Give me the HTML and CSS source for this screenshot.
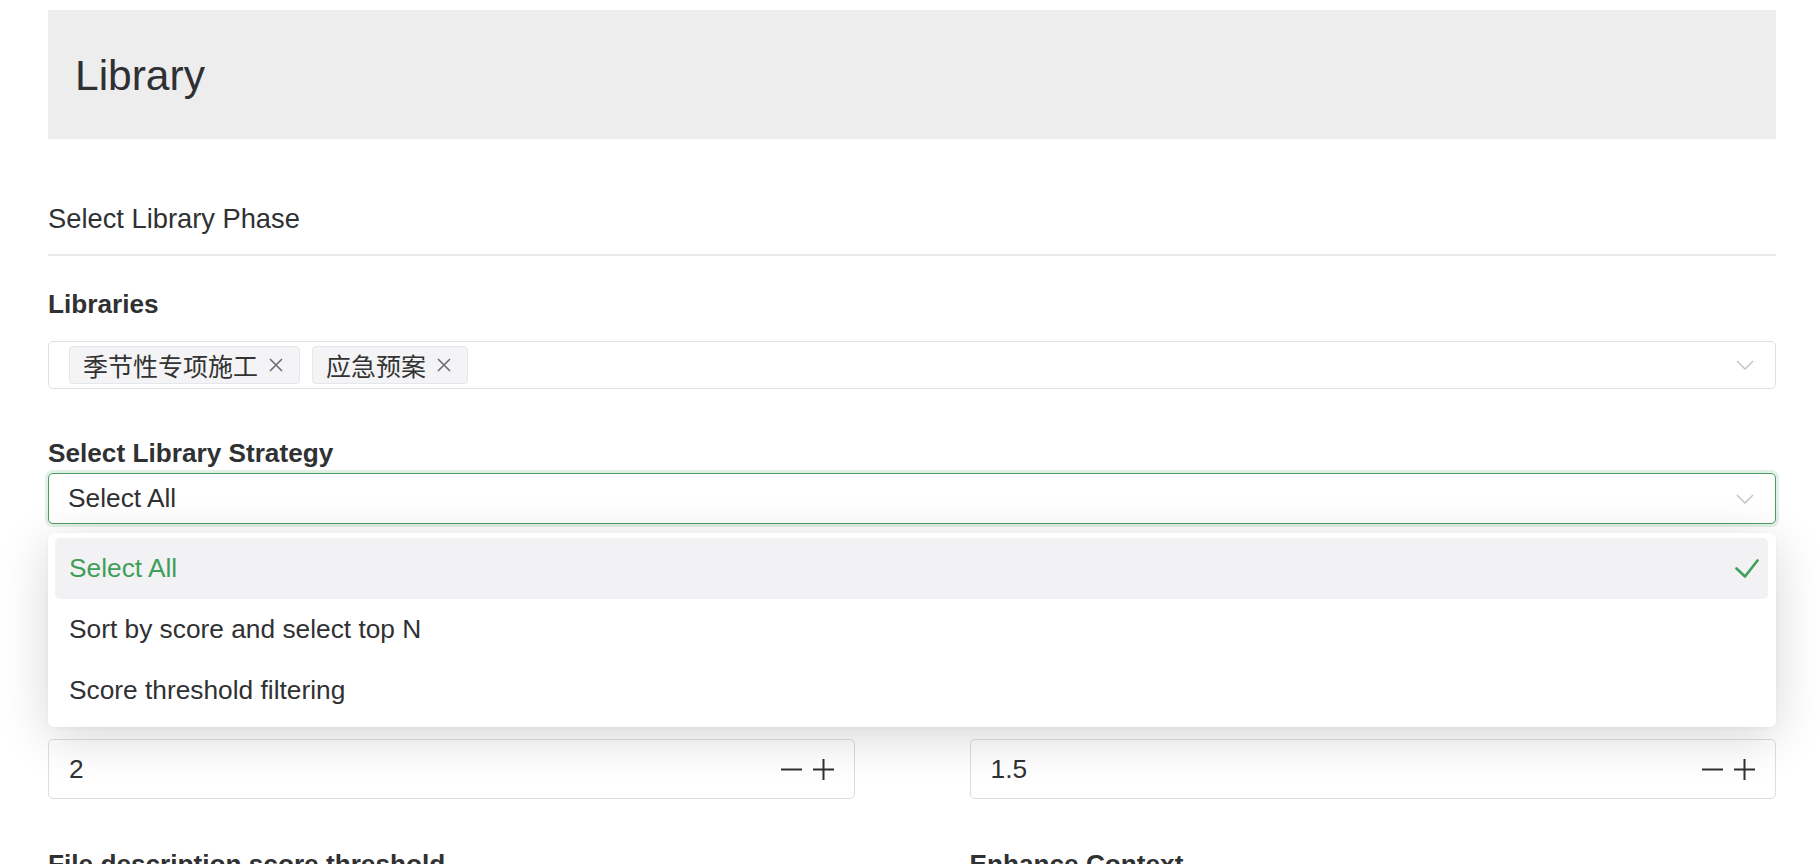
FILE: index.html
```html
<!DOCTYPE html>
<html lang="en">
<head>
<meta charset="utf-8">
<title>Library</title>
<link rel="stylesheet" href="styles.css">
</head>
<body>
<div class="page">
  <header class="page-header">
    <h1 class="page-title">Library</h1>
  </header>

  <section class="phase">
    <h2 class="phase-title">Select Library Phase</h2>

    <div class="field field-libraries">
      <label class="field-label">Libraries</label>
      <div class="multi-select">
        <div class="tags">
          <span class="tag">季节性专项施工<svg class="tag-close" viewBox="0 0 16 16" width="16" height="16"><path d="M2 2 L14 14 M14 2 L2 14"/></svg></span>
          <span class="tag">应急预案<svg class="tag-close" viewBox="0 0 16 16" width="16" height="16"><path d="M2 2 L14 14 M14 2 L2 14"/></svg></span>
        </div>
        <svg class="chevron" viewBox="0 0 18 10" width="18" height="10"><path d="M1 1 L9 9 L17 1"/></svg>
      </div>
    </div>

    <div class="field field-strategy">
      <label class="field-label">Select Library Strategy</label>
      <div class="select-wrap">
        <div class="select is-focus">
          <span class="select-value">Select All</span>
          <svg class="chevron" viewBox="0 0 18 10" width="18" height="10"><path d="M1 1 L9 9 L17 1"/></svg>
        </div>
        <ul class="dropdown">
          <li class="option is-selected"><span>Select All</span><svg class="check" viewBox="0 0 24 20" width="24" height="20"><path d="M1.5 9.5 L10 17.5 L22.5 1.5"/></svg></li>
          <li class="option"><span>Sort by score and select top N</span></li>
          <li class="option"><span>Score threshold filtering</span></li>
        </ul>
      </div>
    </div>

    <div class="grid">
      <div class="field">
        <div class="number-input">
          <span class="number-value">2</span>
          <span class="steppers">
            <svg class="step" viewBox="0 0 21 21" width="21" height="21"><path d="M0 10.5 H21"/></svg>
            <svg class="step" viewBox="0 0 21 21" width="21" height="21"><path d="M0 10.5 H21 M10.5 0 V21"/></svg>
          </span>
        </div>
      </div>
      <div class="field">
        <div class="number-input">
          <span class="number-value">1.5</span>
          <span class="steppers">
            <svg class="step" viewBox="0 0 21 21" width="21" height="21"><path d="M0 10.5 H21"/></svg>
            <svg class="step" viewBox="0 0 21 21" width="21" height="21"><path d="M0 10.5 H21 M10.5 0 V21"/></svg>
          </span>
        </div>
      </div>
      <div class="field">
        <label class="field-label">File description score threshold</label>
        <div class="number-input">
          <span class="number-value">0.5</span>
        </div>
      </div>
      <div class="field">
        <label class="field-label">Enhance Context</label>
        <div class="number-input">
          <span class="number-value">0</span>
        </div>
      </div>
    </div>
  </section>
</div>
</body>
</html>
```

FILE: styles.css
```css
* {
  box-sizing: border-box;
}

html, body {
  margin: 0;
  padding: 0;
  background: #ffffff;
}

body {
  font-family: "Liberation Sans", Arial, "Noto Sans CJK SC", sans-serif;
  color: #303133;
  overflow: hidden;
}

.page {
  padding: 10px 44px 0 48px;
}

.page-header {
  height: 129px;
  background: #ededed;
  display: flex;
  align-items: center;
  padding-left: 27px;
}

.page-title {
  margin: 0;
  font-size: 42.5px;
  font-weight: 400;
  line-height: 48px;
  color: #2f3033;
  padding-top: 3px;
}

.phase-title {
  margin: 64px 0 0;
  font-size: 27.3px;
  font-weight: 400;
  line-height: 32px;
  padding-bottom: 19px;
  border-bottom: 2px solid #ebebef;
  color: #303133;
}

.field {
  display: flex;
  flex-direction: column;
}

.field-label {
  font-size: 26.2px;
  font-weight: 700;
  line-height: 30px;
  color: #303133;
}

.field-libraries {
  margin-top: 33px;
  gap: 22px;
}

.field-strategy {
  margin-top: 49px;
  gap: 5px;
}

.multi-select {
  height: 48px;
  border: 1px solid #dfe0e4;
  border-radius: 5px;
  padding: 0 21px 0 20px;
  display: flex;
  align-items: center;
  justify-content: space-between;
}

.tags {
  display: flex;
  gap: 12px;
}

.tag {
  height: 38px;
  display: inline-flex;
  align-items: center;
  gap: 10px;
  padding: 0 15px 0 13px;
  background: #f4f4f6;
  border: 1px solid #e6e7eb;
  border-radius: 4px;
  font-family: "Noto Sans CJK SC", sans-serif;
  font-size: 25px;
  line-height: 30px;
  color: #333333;
}

.tag-close {
  fill: none;
  stroke: #6b6b70;
  stroke-width: 1.6;
}

.chevron {
  fill: none;
  stroke: #c3c5ca;
  stroke-width: 1.5;
  flex: none;
}

.select-wrap {
  position: relative;
}

.select {
  height: 51px;
  border: 1px solid #c8cbd1;
  border-radius: 5px;
  padding: 0 21px 0 19px;
  display: flex;
  align-items: center;
  justify-content: space-between;
  font-size: 26.3px;
  background: #ffffff;
}

.select.is-focus {
  border-color: #4a9d60;
  box-shadow: 0 0 0 3px #e2f0e5;
}

.dropdown {
  position: absolute;
  z-index: 10;
  top: calc(100% + 9px);
  left: 0;
  right: 0;
  margin: 0;
  padding: 5px 8px 6px 7px;
  list-style: none;
  background: #ffffff;
  border-radius: 6px;
  box-shadow: 0 10px 50px rgba(0, 0, 0, 0.16), 0 1px 4px rgba(0, 0, 0, 0.04);
}

.option {
  height: 61px;
  display: flex;
  align-items: center;
  justify-content: space-between;
  padding: 0 9px 0 14px;
  border-radius: 5px;
  font-size: 26.3px;
  color: #303133;
}

.option.is-selected {
  background: #f2f2f4;
  color: #3f9f5a;
}

.check {
  fill: none;
  stroke: #3f9f5a;
  stroke-width: 2.6;
  stroke-linecap: round;
  stroke-linejoin: round;
}

.grid {
  margin-top: 215px;
  display: grid;
  grid-template-columns: 1fr 1fr;
  column-gap: 115px;
  row-gap: 50px;
}

.grid .field {
  gap: 5px;
}

.number-input {
  height: 60px;
  border: 1px solid #dcdde1;
  border-radius: 5px;
  padding: 0 20px 0 20px;
  display: flex;
  align-items: center;
  justify-content: space-between;
  font-size: 26.3px;
}

.steppers {
  display: flex;
  gap: 11px;
}

.step {
  fill: none;
  stroke: #303133;
  stroke-width: 2;
}
```
